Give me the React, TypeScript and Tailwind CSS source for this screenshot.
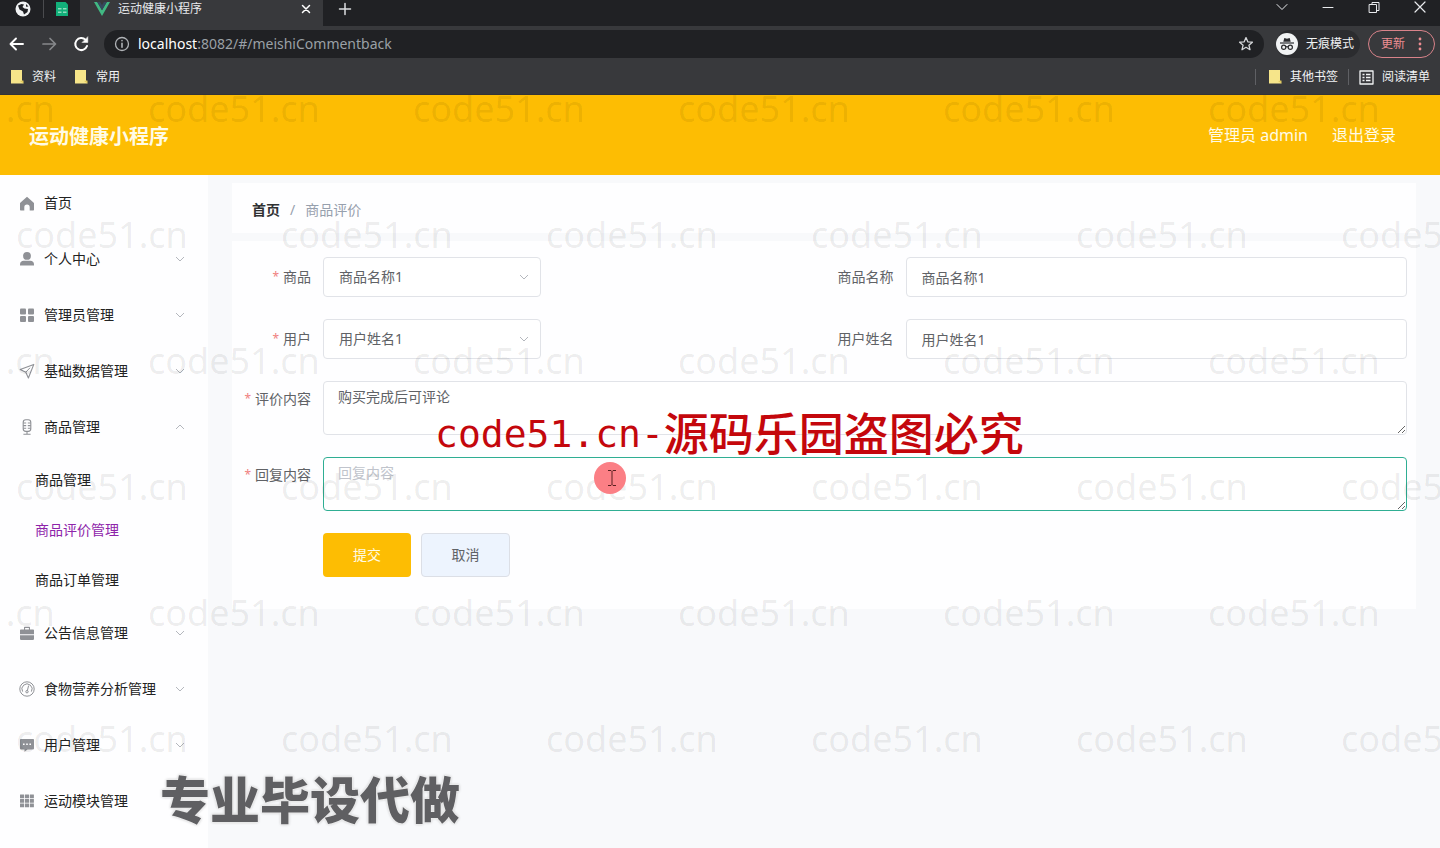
import type { ReactNode } from 'react';

type MenuItem = { label: string; icon: ReactNode; arrow?: 'down' | 'up'; children?: { label: string; active?: boolean }[] };

const Svg = ({ children }: { children: ReactNode }) => (
  <svg viewBox="0 0 16 16" className="size-4 shrink-0" fill="currentColor" aria-hidden="true">
    {children}
  </svg>
);

const HomeIcon = () => (
  <Svg>
    <path d="M8 1.8 1 8v6.700c0 .4.3.8.7.8h3.600v-3.200a2.700 2.700 0 0 1 5.400 0v3.200h3.600c.4 0 .7-.4.7-.8V8z" />
  </Svg>
);
const UserIcon = () => (
  <Svg>
    <circle cx="8" cy="4.9" r="3.9" />
    <path d="M1 14.6v-1.4c0-2 1.6-3.4 3.6-3.4h6.8c2 0 3.6 1.4 3.6 3.4v1.4z" />
  </Svg>
);
const MenuIcon = () => (
  <Svg>
    <rect x="1" y="1.5" width="6" height="6" rx="1" />
    <rect x="9" y="1.5" width="6" height="6" rx="1" />
    <rect x="1" y="9" width="6" height="6" rx="1" />
    <rect x="9" y="9" width="6" height="6" rx="1" />
  </Svg>
);
const PositionIcon = () => (
  <Svg>
    <path d="M14.8 1.4 1.2 6.6l5.6 2.6L9.4 15z" fill="none" stroke="currentColor" strokeWidth="1.1" strokeLinejoin="round" />
    <path d="m6.8 9.2 4.2-4.4" fill="none" stroke="currentColor" strokeWidth="1" />
  </Svg>
);
const MicIcon = () => (
  <Svg>
    <g fill="none" stroke="currentColor" strokeWidth="1.1">
      <rect x="4.2" y=".8" width="7.6" height="11.6" rx="2.6" />
      <path d="M4.2 4h3M8.8 4h3M4.2 6.6h3M8.8 6.6h3M4.2 9.2h3M8.8 9.2h3M8 12.4v2.4M4.4 15.2h7.2" />
    </g>
  </Svg>
);
const BriefcaseIcon = () => (
  <Svg>
    <path
      fillRule="evenodd"
      d="M5 4.500V2.500c0-.4.3-.7.7-.7h4.600c.4 0 .7.3.7.7v2h3.200c.5 0 .8.3.8.8v4H1v-4c0-.5.3-.8.8-.8zm1.100 0h3.800V3H6.100zM1 10.200h14v3.900c0 .5-.3.800-.8.800H1.800c-.5 0-.8-.3-.8-.8z"
    />
  </Svg>
);
const OdometerIcon = () => (
  <Svg>
    <g fill="none" stroke="currentColor" strokeWidth="1">
      <circle cx="8" cy="8" r="7.2" />
      <path d="M3.600 10.600a5.100 5.100 0 1 1 8.800 0" />
      <path d="m9.600 4.600-1.200 5" />
      <circle cx="8" cy="10.700" r="1.200" />
    </g>
  </Svg>
);
const ChatIcon = () => (
  <Svg>
    <path
      fillRule="evenodd"
      d="M1.800 2h12.400c.5 0 .8.3.8.8v8.800c0 .5-.3.800-.8.800H8.500L5.500 14.800v-2.400H1.800c-.5 0-.8-.3-.8-.8V2.800c0-.5.3-.8.8-.8zM4 6.500v1.600h1.600V6.500zm3.200 0v1.600h1.600V6.500zm3.200 0v1.600H12V6.500z"
    />
  </Svg>
);
const GridIcon = () => (
  <Svg>
    {[1.5, 6, 10.5].map((y) =>
      [1, 5.900, 10.800].map((x) => <rect key={`${x}-${y}`} x={x} y={y} width="4.100" height="3.700" rx=".3" />),
    )}
  </Svg>
);

const Chevron = ({ up = false }: { up?: boolean }) => (
  <svg viewBox="0 0 10 6" className="h-1.5 w-2.5 text-[#b4b7bd]" fill="none" stroke="currentColor" aria-hidden="true">
    <path d={up ? 'M1 5 5 1l4 4' : 'm1 1 4 4 4-4'} />
  </svg>
);

const menu: MenuItem[] = [
  { label: '首页', icon: <HomeIcon /> },
  { label: '个人中心', icon: <UserIcon />, arrow: 'down' },
  { label: '管理员管理', icon: <MenuIcon />, arrow: 'down' },
  { label: '基础数据管理', icon: <PositionIcon />, arrow: 'down' },
  {
    label: '商品管理',
    icon: <MicIcon />,
    arrow: 'up',
    children: [{ label: '商品管理' }, { label: '商品评价管理', active: true }, { label: '商品订单管理' }],
  },
  { label: '公告信息管理', icon: <BriefcaseIcon />, arrow: 'down' },
  { label: '食物营养分析管理', icon: <OdometerIcon />, arrow: 'down' },
  { label: '用户管理', icon: <ChatIcon />, arrow: 'down' },
  { label: '运动模块管理', icon: <GridIcon /> },
];

const NoteIcon = () => (
  <svg viewBox="0 0 14 16" className="h-4 w-3.5 shrink-0" aria-hidden="true">
    <path d="M1 1h11v10l1.500 3.500H1z" fill="#f6e58a" />
    <path d="m10 12 3.500-.5v3z" fill="#e2c95c" />
  </svg>
);

const line = { fill: 'none', stroke: 'currentColor', strokeLinecap: 'round', strokeLinejoin: 'round' } as const;

function TabStrip() {
  return (
    <div className="flex h-[26px] items-start bg-[#202124]">
      <div className="flex h-[18px] w-11 items-center justify-end border-r border-[#4a4b4e] pr-3">
        <svg viewBox="0 0 16 16" className="size-4" aria-hidden="true">
          <circle cx="8" cy="8" r="7.500" fill="#f1f3f4" />
          <path d="M3 4.500 6.500 3 9 3.600 7.500 6 9.500 7.500 13 8l-.5 3L9 13.500l-1-3L4.500 8.500z" fill="#202124" />
          <path d="m11 3 2.500 2.500-2.500.3z" fill="#202124" />
        </svg>
      </div>
      <div className="flex h-[18px] w-9 items-center justify-center">
        <svg viewBox="0 0 14 14" className="size-3.5" aria-hidden="true">
          <path d="M1 0h9.500L13 2.500V14H1z" fill="#12b07a" />
          <path d="M3 6h3.500v1.500H3zM8 6h3.500v1.500H8zM3 9.500h3.500V11H3zM8 9.500h3.500V11H8z" fill="#8fdcbd" />
        </svg>
      </div>
      <div className="flex h-full w-[243px] items-start bg-[#38393c] pr-2.5 pl-3.5">
        <div className="flex h-[18px] flex-1 items-center gap-2">
          <svg viewBox="0 0 16 14" className="h-3.5 w-4" aria-hidden="true">
            <path d="M0 0h3.200L8 8.300 12.800 0H16L8 14z" fill="#41b883" />
            <path d="M3.200 0h2.900L8 3.300 9.900 0h2.900L8 8.300z" fill="#35495e" />
          </svg>
          <span className="flex-1 text-xs text-[#e8eaed]">运动健康小程序</span>
          <button aria-label="关闭标签页" className="flex size-3.5 items-center justify-center text-white">
            <svg viewBox="0 0 10 10" className="size-2.5" {...line} strokeWidth="1.500">
              <path d="m1.500 1.500 7 7M8.500 1.500l-7 7" />
            </svg>
          </button>
        </div>
      </div>
      <button aria-label="新标签页" className="ml-3.5 flex h-[18px] w-4 items-center justify-center text-[#dcdee1]">
        <svg viewBox="0 0 14 14" className="size-3.5" {...line} strokeWidth="1.500">
          <path d="M7 1.500v11M1.500 7h11" />
        </svg>
      </button>
      <div className="ml-auto flex h-3.5 items-center gap-[34px] pr-3.5 text-[#e8eaed]">
        <button aria-label="搜索标签页">
          <svg viewBox="0 0 12 12" className="size-3" {...line}>
            <path d="m1 3.500 5 5 5-5" />
          </svg>
        </button>
        <button aria-label="最小化">
          <svg viewBox="0 0 12 12" className="size-3" {...line}>
            <path d="M1 6.500h10" />
          </svg>
        </button>
        <button aria-label="还原">
          <svg viewBox="0 0 12 12" className="size-3" {...line}>
            <path d="M1.500 3.500h7v8h-7zM4 3.500v-2h7v8H8.500" />
          </svg>
        </button>
        <button aria-label="关闭">
          <svg viewBox="0 0 12 12" className="size-3" {...line} strokeWidth="1.200">
            <path d="m1 1 10 10M11 1 1 11" />
          </svg>
        </button>
      </div>
    </div>
  );
}

function Toolbar() {
  return (
    <div className="flex h-9 items-center pr-[5px] pl-2">
      <div className="flex w-24 items-center gap-3.5 text-white">
        <button aria-label="后退">
          <svg viewBox="0 0 18 18" className="size-[18px]" {...line} strokeWidth="1.900">
            <path d="M15 9H3M8 3.500 2.500 9 8 14.500" />
          </svg>
        </button>
        <button aria-label="前进" className="text-[#86888b]">
          <svg viewBox="0 0 18 18" className="size-[18px]" {...line} strokeWidth="1.700">
            <path d="M3 9h12M10 3.500 15.500 9 10 14.500" />
          </svg>
        </button>
        <button aria-label="重新加载">
          <svg viewBox="0 0 18 18" className="size-[18px]" {...line} strokeWidth="2">
            <path d="M15 11A6 6 0 1 1 13.600 4.900" />
            <path d="M15.800 2v5.500h-5.500z" fill="currentColor" strokeWidth=".5" />
          </svg>
        </button>
      </div>
      <div className="flex h-7 flex-1 items-center rounded-full bg-[#202124] px-2.5">
        <svg viewBox="0 0 16 16" className="size-4 text-[#b0b3b7]" {...line} strokeWidth="1.300">
          <circle cx="8" cy="8" r="6.500" />
          <path d="M8 7.300v4M8 4.600v.2" strokeWidth="1.600" />
        </svg>
        <div className="ml-2 flex-1 text-sm text-[#9aa0a6]">
          <span className="text-white">localhost</span>:8082/#/meishiCommentback
        </div>
        <button aria-label="为此标签页添加书签" className="text-[#d5d7da]">
          <svg viewBox="0 0 16 16" className="size-4" {...line} strokeWidth="1.300">
            <path d="m8 1.600 1.800 4.200 4.600.4-3.500 3 1.100 4.500L8 11.300l-4 2.400 1.100-4.500-3.500-3 4.600-.4z" />
          </svg>
        </button>
      </div>
      <div className="ml-3 flex h-7 items-center gap-2 rounded-full bg-[#2b2c2f] pr-1.5 text-xs text-[#f1f3f4]">
        <svg viewBox="0 0 22 22" className="size-[22px]" aria-hidden="true">
          <circle cx="11" cy="11" r="11" fill="#f1f3f4" />
          <path d="M7.300 8.800 8.300 5l2.700.7 2.700-.7 1 3.800z" fill="#2b2c2f" />
          <path d="M4 10h14" stroke="#2b2c2f" strokeWidth="1.200" />
          <g fill="none" stroke="#2b2c2f" strokeWidth="1.200">
            <circle cx="7.700" cy="14.200" r="2.100" />
            <circle cx="14.300" cy="14.200" r="2.100" />
            <path d="M9.800 14q1.200-.8 2.400 0" />
          </g>
        </svg>
        无痕模式
      </div>
      <button className="ml-2 flex h-7 w-[67px] items-center justify-between rounded-full border border-[#d9838a] px-3 text-xs text-[#ee8d92]">
        更新
        <svg viewBox="0 0 4 14" className="h-3.5 w-1" fill="currentColor" aria-hidden="true">
          <circle cx="2" cy="2" r="1.400" />
          <circle cx="2" cy="7" r="1.400" />
          <circle cx="2" cy="12" r="1.400" />
        </svg>
      </button>
    </div>
  );
}

function Bookmarks() {
  return (
    <div className="flex h-[33px] items-center border-b border-[#333336] px-2.5 pb-0.5 text-xs text-[#f1f3f4]">
      <a href="#ziliao" className="flex items-center gap-2">
        <NoteIcon />
        资料
      </a>
      <a href="#changyong" className="ml-[18px] flex items-center gap-2">
        <NoteIcon />
        常用
      </a>
      <div className="ml-auto flex items-center">
        <a href="#other" className="flex h-4 items-center gap-2 border-l border-[#5f6064] pl-3">
          <NoteIcon />
          其他书签
        </a>
        <a href="#reading" className="ml-2.5 flex h-4 items-center gap-2 border-l border-[#5f6064] pl-2.5">
          <svg viewBox="0 0 15 15" className="size-[15px]" {...line} strokeWidth="1.300" strokeLinecap="butt">
            <path d="M1 1h13v13H1z" />
            <path d="M3.500 4.500h2M7 4.500h4.500M3.500 7.500h2M7 7.500h4.500M3.500 10.500h2M7 10.500h4.500" />
          </svg>
          阅读清单
        </a>
      </div>
    </div>
  );
}

function Sidebar() {
  return (
    <nav className="w-52 shrink-0 bg-[#fefeff] text-sm text-[#222]">
      <ul>
        {menu.map((item) => (
          <li key={item.label}>
            <a href="#menu" className="flex h-14 items-center pr-[23px] pl-[19px]">
              <span className="mr-[9px] text-[#8f9196]">{item.icon}</span>
              <span className="flex-1">{item.label}</span>
              {item.arrow && <Chevron up={item.arrow === 'up'} />}
            </a>
            {item.children && (
              <ul>
                {item.children.map((c) => (
                  <li key={c.label}>
                    <a
                      href="#submenu"
                      className={
                        c.active ? 'flex h-[50px] items-center pl-[35px] text-[#8e24aa]' : 'flex h-[50px] items-center pl-[35px]'
                      }
                    >
                      {c.label}
                    </a>
                  </li>
                ))}
              </ul>
            )}
          </li>
        ))}
      </ul>
    </nav>
  );
}

function Label({ htmlFor, required, tall, children }: { htmlFor: string; required?: boolean; tall?: boolean; children: ReactNode }) {
  return (
    <label
      htmlFor={htmlFor}
      className={`flex w-[81px] shrink-0 items-center justify-end gap-1 pr-3 whitespace-nowrap text-[#606266] ${tall ? 'h-9' : 'h-10'}`}
    >
      {required && <span className="text-xs text-[#f08080]">*</span>}
      {children}
    </label>
  );
}

function SelectField({ id, label, value }: { id: string; label: string; value: string }) {
  return (
    <div className="flex">
      <Label htmlFor={id} required>
        {label}
      </Label>
      <div className="grid w-[218px] items-center">
        <select
          id={id}
          className="col-start-1 row-start-1 h-10 w-full appearance-none rounded-sm border border-[#e1e3e8] bg-white px-[15px] text-[#606266]"
        >
          <option>{value}</option>
        </select>
        <span className="pointer-events-none col-start-1 row-start-1 justify-self-end pr-3">
          <Chevron />
        </span>
      </div>
    </div>
  );
}

function InputField({ id, label, value }: { id: string; label: string; value: string }) {
  return (
    <div className="flex">
      <Label htmlFor={id}>{label}</Label>
      <input
        id={id}
        defaultValue={value}
        className="h-10 min-w-0 flex-1 rounded-sm border border-[#e1e3e8] bg-white px-[15px] text-[#606266]"
      />
    </div>
  );
}

function CommentForm() {
  return (
    <form className="mt-2 grid grid-cols-2 gap-y-[22px] bg-[#fefeff] pt-4 pr-[9px] pb-8 pl-2.5 text-sm">
      <SelectField id="goods" label="商品" value="商品名称1" />
      <InputField id="goodsName" label="商品名称" value="商品名称1" />
      <SelectField id="user" label="用户" value="用户姓名1" />
      <InputField id="userName" label="用户姓名" value="用户姓名1" />
      <div className="col-span-2 flex">
        <Label htmlFor="comment" required tall>
          评价内容
        </Label>
        <textarea
          id="comment"
          defaultValue="购买完成后可评论"
          className="h-[54px] flex-1 resize-y rounded-sm border border-[#e1e3e8] bg-white px-3.5 py-1 leading-[21px] text-[#606266]"
        />
      </div>
      <div className="col-span-2 flex">
        <Label htmlFor="reply" required tall>
          回复内容
        </Label>
        <textarea
          id="reply"
          placeholder="回复内容"
          className="h-[54px] flex-1 resize-y rounded border border-[#2fae93] bg-white px-3.5 py-1 leading-[21px] text-[#606266] outline-none placeholder:text-[#c0c4cc]"
        />
      </div>
      <div className="col-span-2 flex gap-2.5 pl-[81px]">
        <button type="button" className="h-11 w-[88px] rounded bg-[#fdbd03] text-[#fffbe6]">
          提交
        </button>
        <button type="button" className="h-11 w-[89px] rounded-sm border border-[#dcdfe6] bg-[#edf4fe] text-[#606266]">
          取消
        </button>
      </div>
    </form>
  );
}

function Watermarks() {
  const rows = [0, 1, 2, 3, 4, 5];
  return (
    <div className="pointer-events-none absolute inset-0 overflow-hidden font-['Noto_Sans'] text-4xl leading-[126px] text-black/8 select-none">
      <div className="pt-[46px]">
        {rows.map((r) => (
          <div key={r} className={r % 2 === 0 ? 'ml-[-117px] flex' : 'ml-4 flex'}>
            {rows.map((c) => (
              <span key={c} className="w-[265px] shrink-0">
                code51.cn
              </span>
            ))}
          </div>
        ))}
      </div>
    </div>
  );
}

export default function App() {
  return (
    <div className="relative flex min-h-screen flex-col overflow-hidden bg-[#f8f9fb] font-['Noto_Sans','Noto_Sans_CJK_SC',sans-serif]">
      <div className="bg-[#38393c]">
        <TabStrip />
        <Toolbar />
        <Bookmarks />
      </div>
      <header className="flex h-20 items-center justify-between bg-[#fdbd03] pr-11 pl-[29px] text-base text-[#fffbe6]">
        <h1 className="pt-1 text-xl font-bold text-[#fffbe6]">运动健康小程序</h1>
        <div className="flex gap-6">
          <span>管理员 admin</span>
          <a href="#logout">退出登录</a>
        </div>
      </header>
      <div className="flex flex-1">
        <Sidebar />
        <main className="min-w-0 flex-1 px-6 pt-2">
          <div className="flex h-[50px] items-center gap-2.5 bg-[#fefeff] pt-1 pl-5 text-sm text-[#97a0ad]">
            <a href="#home" className="font-bold text-[#303133]">
              首页
            </a>
            <span>/</span>
            <span>商品评价</span>
          </div>
          <CommentForm />
        </main>
      </div>
      <Watermarks />
      <div className="pointer-events-none absolute top-[462px] left-[594px] flex size-8 items-center justify-center rounded-full bg-[#fb7f85]">
        <svg viewBox="0 0 10 16" className="ml-1 h-4 w-2.5 text-[#5a2020]" {...line} strokeLinecap="butt">
          <path d="M1 .5h3l1 1 1-1h3M5 1.500v13M1 15.500h3l1-1 1 1h3" />
        </svg>
      </div>
      <p className="pointer-events-none absolute top-[404px] left-[435px] flex items-center leading-[60px] whitespace-nowrap text-[#c4070c]">
        <span className="font-['DejaVu_Sans_Mono',monospace] text-[38px]">code51.cn-</span>
        <span className="text-[45px] font-medium">源码乐园盗图必究</span>
      </p>
      <p className="pointer-events-none absolute top-[764px] left-40 text-[50px] leading-[72px] font-black whitespace-nowrap text-[#5f5f62] [text-shadow:0_0_2px_#fff,0_0_2px_#fff,0_0_3px_#999]">
        专业毕设代做
      </p>
    </div>
  );
}
